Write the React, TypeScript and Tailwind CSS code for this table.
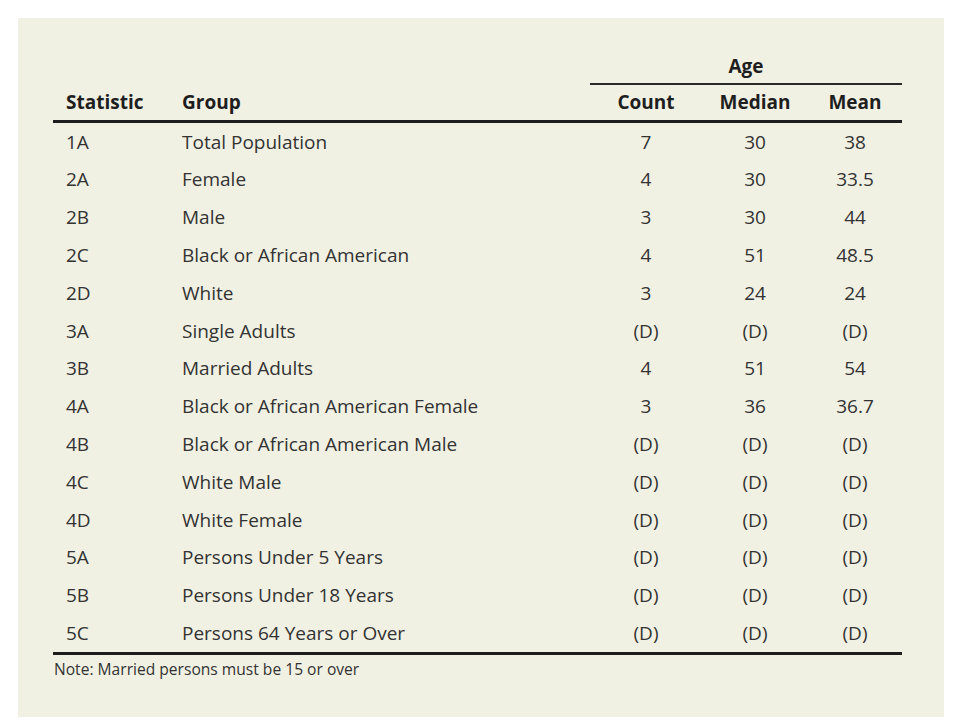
import React from "react";

const rows: [string, string, string, string, string][] = [
  ["1A", "Total Population", "7", "30", "38"],
  ["2A", "Female", "4", "30", "33.5"],
  ["2B", "Male", "3", "30", "44"],
  ["2C", "Black or African American", "4", "51", "48.5"],
  ["2D", "White", "3", "24", "24"],
  ["3A", "Single Adults", "(D)", "(D)", "(D)"],
  ["3B", "Married Adults", "4", "51", "54"],
  ["4A", "Black or African American Female", "3", "36", "36.7"],
  ["4B", "Black or African American Male", "(D)", "(D)", "(D)"],
  ["4C", "White Male", "(D)", "(D)", "(D)"],
  ["4D", "White Female", "(D)", "(D)", "(D)"],
  ["5A", "Persons Under 5 Years", "(D)", "(D)", "(D)"],
  ["5B", "Persons Under 18 Years", "(D)", "(D)", "(D)"],
  ["5C", "Persons 64 Years or Over", "(D)", "(D)", "(D)"],
];

const cols = "grid grid-cols-[117px_420px_112px_106px_94px]";

export default function App() {
  return (
    <div className="w-[954px] h-[724px] bg-white pt-[18px] pl-[18px]" style={{ fontFamily: "'Open Sans', 'Noto Sans', sans-serif" }}>
      <div className="w-[926px] h-[699px] bg-[#f1f1e3] pl-[35px] pt-[32px]">
        <div className="w-[849px]">
          {/* Age super-header */}
          <div className={cols}>
            <div className="col-span-2" />
            <div className="col-span-3 flex flex-col">
              <div className="h-[33px] flex items-center justify-center text-[19px] font-bold text-[#1e1e1e]">Age</div>
              <div className="h-[2px] bg-[#2a2a2a]" />
            </div>
          </div>
          {/* Header */}
          <div className={`${cols} h-[35px] items-center text-[19px] font-bold text-[#1e1e1e]`}>
            <div className="pl-[13px]">Statistic</div>
            <div className="pl-[12px]">Group</div>
            <div className="text-center">Count</div>
            <div className="text-center">Median</div>
            <div className="text-center">Mean</div>
          </div>
          <div className="h-[3px] bg-[#1e1e1e]" />
          {rows.map((r) => (
            <div key={r[0]} className={`${cols} h-[37.8px] items-center text-[19px] text-[#333333]`}>
              <div className="pl-[13px]">{r[0]}</div>
              <div className="pl-[12px]">{r[1]}</div>
              <div className="text-center">{r[2]}</div>
              <div className="text-center">{r[3]}</div>
              <div className="text-center">{r[4]}</div>
            </div>
          ))}
          <div className="h-[3px] bg-[#1e1e1e]" />
          <div className="h-[30px] flex items-center pl-px text-[15.6px] text-[#333333]">
            Note: Married persons must be 15 or over
          </div>
        </div>
      </div>
    </div>
  );
}
